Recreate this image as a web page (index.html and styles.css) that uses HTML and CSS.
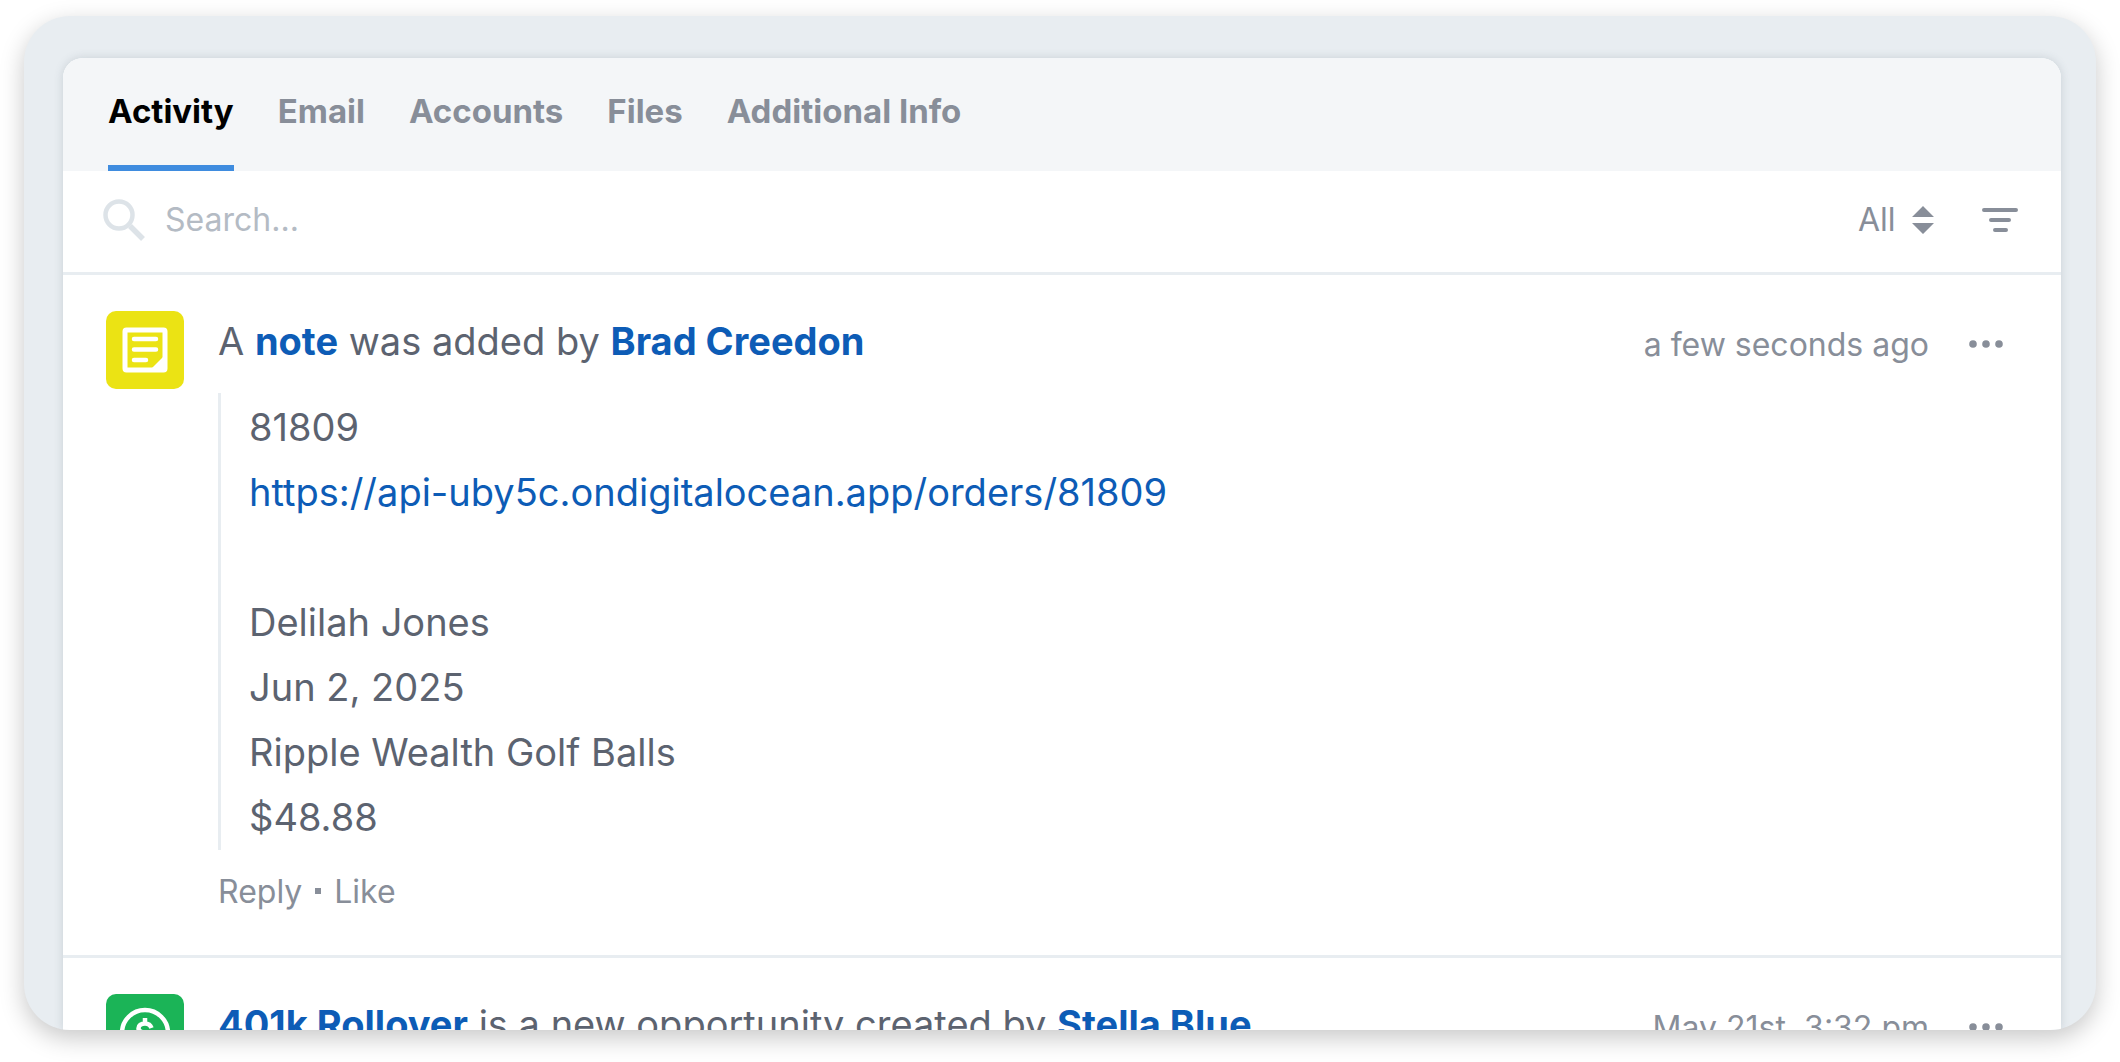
FILE: index.html
```html
<!DOCTYPE html>
<html lang="en">
  <head>
    <meta charset="UTF-8" />
    <meta name="viewport" content="width=device-width, initial-scale=1.0" />
    <title>Activity</title>
    <link rel="stylesheet" href="styles.css">
  </head>
  <body>
    <div class="frame">
      <main class="panel">
        <nav class="tabs">
          <a class="tab active" href="#activity">Activity</a>
          <a class="tab" href="#email">Email</a>
          <a class="tab" href="#accounts">Accounts</a>
          <a class="tab" href="#files">Files</a>
          <a class="tab" href="#info">Additional Info</a>
        </nav>

        <div class="toolbar">
          <label class="search-icon" for="search" aria-label="Search">
            <svg width="42" height="42" viewBox="0 0 42 42" fill="none" stroke="#dde3e8">
              <circle cx="16" cy="16" r="13.5" stroke-width="4.5" />
              <path d="M27 27l13 13" stroke-width="5.5" />
            </svg>
          </label>
          <input class="search" type="text" id="search" placeholder="Search..." />
          <label class="filter">
            <select class="filter-select" aria-label="Show">
              <option>All</option>
            </select>
            <svg width="22" height="28" viewBox="0 0 22 28" fill="#888e99">
              <path d="M11 0l11 11H0zM11 28l11-11H0z" />
            </svg>
          </label>
          <button class="icon-btn" aria-label="Sort">
            <svg width="36" height="26" viewBox="0 0 36 26" stroke="#888e99" stroke-width="4" stroke-linecap="round">
              <path d="M2 3h32M9 13h18M13 23h11" />
            </svg>
          </button>
        </div>

        <article class="item">
          <div class="badge note">
            <svg width="46" height="46" viewBox="0 0 46 46">
              <rect x="3" y="3" width="40" height="40" fill="none" stroke="#fff" stroke-width="5" rx="1.5" />
              <path d="M12 12h22M12 22.500h22M12 33h12" stroke="#fff" stroke-width="4.500" stroke-linecap="round" />
              <path d="M29 42l13-13v13z" fill="#fff" />
            </svg>
          </div>
          <div class="content">
            <div class="heading">
              <p class="title">A <a href="#note">note</a> was added by <a href="#brad">Brad Creedon</a></p>
              <span class="time">a few seconds ago</span>
              <button class="more" aria-label="More">
                <svg width="36" height="8" viewBox="0 0 36 8" fill="#888e99">
                  <circle cx="4" cy="4" r="3.8" />
                  <circle cx="17" cy="4" r="3.8" />
                  <circle cx="30" cy="4" r="3.8" />
                </svg>
              </button>
            </div>
            <div class="quote">
              81809<br />
              <a href="https://api-uby5c.ondigitalocean.app/orders/81809">https://api-uby5c.ondigitalocean.app/orders/81809</a><br />
              <br />
              Delilah Jones<br />
              Jun 2, 2025<br />
              Ripple Wealth Golf Balls<br />
              $48.88
            </div>
            <div class="actions">
              <button>Reply</button>
              <span class="dot"></span>
              <button>Like</button>
            </div>
          </div>
        </article>

        <article class="item">
          <div class="badge money">
            <svg width="52" height="52" viewBox="0 0 52 52" fill="none" stroke="#fff" stroke-width="4.500">
              <circle cx="26" cy="26" r="23" />
              <path d="M32.500 21c-1-3-3.500-4.500-6.500-4.500-4 0-6.500 2-6.500 4.800 0 6.500 13.500 3 13.500 9.500 0 3-3 4.700-7 4.700-3.500 0-6-1.500-7-4.500M26 11v6M26 35v6" />
            </svg>
          </div>
          <div class="content">
            <div class="heading">
              <p class="title"><a href="#rollover">401k Rollover</a> is a new opportunity created by <a href="#stella">Stella Blue</a></p>
              <span class="time">May 21st, 3:32 pm</span>
              <button class="more" aria-label="More">
                <svg width="36" height="8" viewBox="0 0 36 8" fill="#888e99">
                  <circle cx="4" cy="4" r="3.8" />
                  <circle cx="17" cy="4" r="3.8" />
                  <circle cx="30" cy="4" r="3.8" />
                </svg>
              </button>
            </div>
          </div>
        </article>
      </main>
    </div>
  </body>
</html>
```
FILE: styles.css
```css
* {
  box-sizing: border-box;
}
body {
  margin: 0;
  padding: 16px 24px 32px;
  height: 100vh;
  background-color: #fff;
  color: #5c6370;
  font-family: Inter, "Liberation Sans", sans-serif;
}
a {
  color: #0d5cb6;
  text-decoration: none;
}
button {
  padding: 0;
  border: none;
  background: none;
  color: inherit;
  font: inherit;
  cursor: pointer;
}
svg {
  display: block;
}
.frame {
  height: 100%;
  padding: 42px 35px 0 39px;
  overflow: hidden;
  border-radius: 46px;
  background-color: #e8edf1;
  box-shadow: 0 8px 24px rgba(0, 0, 0, 0.22);
}
.panel {
  height: 100%;
  overflow: hidden;
  border-radius: 20px 20px 0 0;
  background-color: #fff;
  box-shadow: 0 0 10px rgba(60, 75, 95, 0.18);
}
.tabs {
  display: flex;
  gap: 44px;
  padding: 0 45px;
  background-color: #f4f6f8;
}
.tab {
  height: 113px;
  padding-top: 33px;
  border-bottom: 6px solid transparent;
  color: #888e99;
  font-size: 33px;
  font-weight: bold;
  line-height: 40px;
}
.tab.active {
  border-color: #3f8cdf;
  color: #000;
}
.toolbar {
  display: flex;
  align-items: center;
  height: 104px;
  padding: 0 43px 4px 40px;
  border-bottom: 3px solid #e8edf1;
}
.search {
  flex: 1;
  min-width: 0;
  margin-left: 20px;
  padding: 0;
  border: none;
  outline: none;
  color: #5c6370;
  font: inherit;
  font-size: 32px;
}
.search::placeholder {
  color: #b4bbc4;
}
.filter {
  display: flex;
  align-items: center;
  gap: 16px;
  margin-right: 48px;
}
.filter-select {
  appearance: none;
  padding: 0;
  border: none;
  background: none;
  color: #888e99;
  font: inherit;
  font-size: 32px;
}
.item {
  display: flex;
  gap: 34px;
  padding: 36px 56px 23px 43px;
  border-bottom: 3px solid #e8edf1;
}
.badge {
  display: flex;
  flex: none;
  align-items: center;
  justify-content: center;
  width: 78px;
  height: 78px;
  border-radius: 10px;
}
.note {
  background-color: #ebe314;
}
.money {
  background-color: #1bb457;
}
.content {
  flex: 1;
  min-width: 0;
}
.heading {
  display: flex;
  align-items: center;
  height: 82px;
  padding-bottom: 16px;
}
.title {
  flex: 1;
  margin: 0;
  padding-bottom: 6px;
  font-size: 38px;
}
.title a {
  font-weight: bold;
}
.time {
  margin-right: 40px;
  color: #888e99;
  font-size: 32px;
}
.quote {
  padding: 2px 0 0 28px;
  border-left: 3px solid #e8edf1;
  font-size: 38px;
  line-height: 65px;
}
.actions {
  display: flex;
  align-items: center;
  gap: 13px;
  height: 82px;
  color: #888e99;
  font-size: 32px;
}
.dot {
  width: 6px;
  height: 6px;
  background-color: #888e99;
}
```
